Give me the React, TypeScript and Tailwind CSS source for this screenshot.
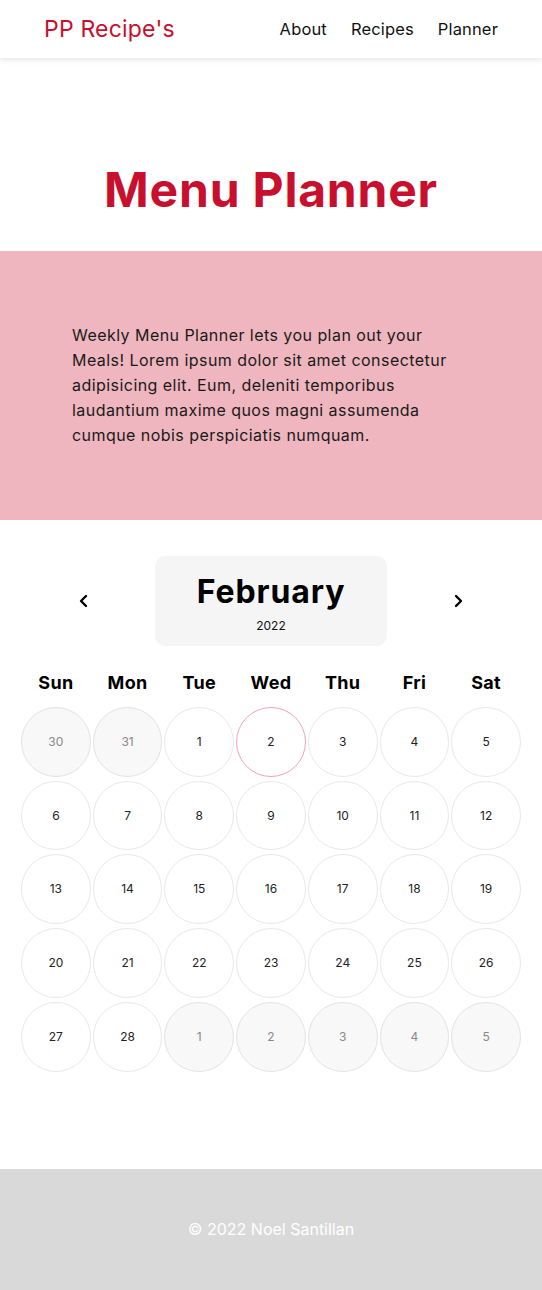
import React from "react";

const days = ["Sun", "Mon", "Tue", "Wed", "Thu", "Fri", "Sat"];

type Cell = { n: number; muted: boolean; today?: boolean };

const cells: Cell[] = [
  { n: 30, muted: true },
  { n: 31, muted: true },
  ...Array.from({ length: 28 }, (_, i) => ({ n: i + 1, muted: false, today: i + 1 === 2 })),
  { n: 1, muted: true },
  { n: 2, muted: true },
  { n: 3, muted: true },
  { n: 4, muted: true },
  { n: 5, muted: true },
];

export default function App() {
  return (
    <div className="min-h-[1290px] flex flex-col bg-white text-black" style={{ fontFamily: "Inter, 'Noto Sans', sans-serif" }}>
      <header className="h-[58px] flex items-center justify-between pl-[44px] pr-[44px] shadow-[0_2px_6px_rgba(0,0,0,0.1)] relative z-10">
        <div className="text-[23px] text-[#c8102e] tracking-[0.2px]">PP Recipe's</div>
        <nav className="flex gap-[24px] text-[16.5px] text-[#111] tracking-[0.15px]">
          <span>About</span>
          <span>Recipes</span>
          <span>Planner</span>
        </nav>
      </header>

      <section className="h-[193px] flex items-center justify-center pt-[71px]">
        <h1 className="text-[48px] font-bold text-[#c8102e] leading-none tracking-[0.8px]">Menu Planner</h1>
      </section>

      <section className="h-[269px] bg-[#efb6bf] pl-[72px] pr-[40px] pt-[72px]">
        <p className="text-[16px] leading-[25px] text-[#1a1a1a] tracking-[0.45px]">
          Weekly Menu Planner lets you plan out your<br />
          Meals! Lorem ipsum dolor sit amet consectetur<br />
          adipisicing elit. Eum, deleniti temporibus<br />
          laudantium maxime quos magni assumenda<br />
          cumque nobis perspiciatis numquam.
        </p>
      </section>

      <section className="flex flex-col items-center pt-[36px] pb-[97px]">
        <div className="flex items-center justify-between w-[400px]">
          <svg width="12" height="14" viewBox="0 0 12 14" className="ml-[7px]">
            <path d="M8 2 L3 7 L8 12" stroke="#000" strokeWidth="2.4" fill="none" strokeLinecap="round" strokeLinejoin="round" />
          </svg>
          <div className="w-[232px] h-[90px] bg-[#f5f5f5] rounded-[10px] flex flex-col items-center justify-center">
            <div className="text-[32px] font-bold leading-none mt-[6px] tracking-[0.9px]">February</div>
            <div className="text-[12px] mt-[12px] leading-none text-[#111]">2022</div>
          </div>
          <svg width="12" height="14" viewBox="0 0 12 14" className="mr-[7px]">
            <path d="M4 2 L9 7 L4 12" stroke="#000" strokeWidth="2.4" fill="none" strokeLinecap="round" strokeLinejoin="round" />
          </svg>
        </div>

        <div className="w-[500px] grid grid-cols-7 gap-x-[2px] mt-[24px]">
          {days.map((d) => (
            <div key={d} className="text-center text-[18px] font-bold leading-[26px] tracking-[0.3px]">{d}</div>
          ))}
        </div>

        <div className="w-[500px] grid grid-cols-7 gap-x-[2px] gap-y-[4px] mt-[11px]">
          {cells.map((c, i) => (
            <div
              key={i}
              className={
                "aspect-square rounded-full flex items-center justify-center text-[12px] border " +
                (c.muted
                  ? "bg-[#f8f8f8] border-[#e3e3e3] text-[#888]"
                  : c.today
                  ? "bg-white border-[#f2a4b3] text-[#222]"
                  : "bg-white border-[#e8e8e8] text-[#222]")
              }
            >
              {c.n}
            </div>
          ))}
        </div>
      </section>

      <footer className="flex-1 min-h-[121px] bg-[#d9d9d9] flex items-center justify-center text-white text-[16px]">
        © 2022 Noel Santillan
      </footer>
    </div>
  );
}
